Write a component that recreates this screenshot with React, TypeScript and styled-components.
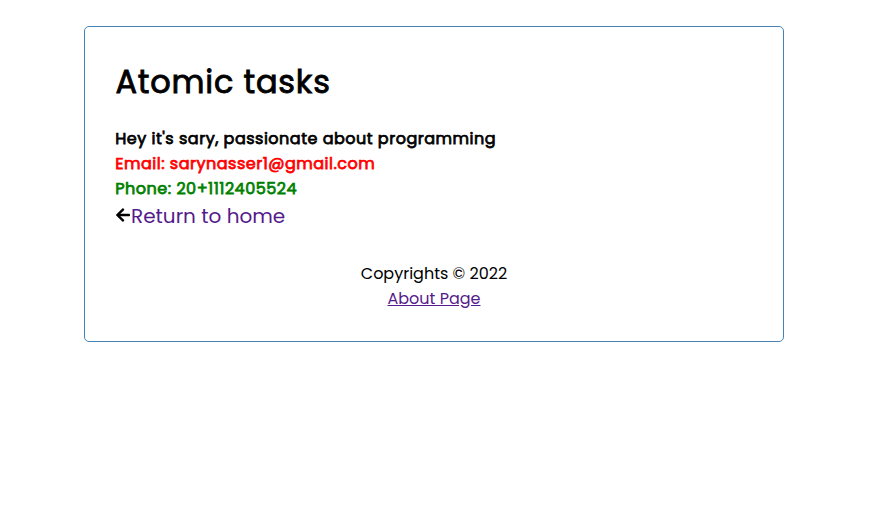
import React from "react";
import styled, { createGlobalStyle } from "styled-components";
import { FaArrowLeft } from "react-icons/fa";

const GlobalStyle = createGlobalStyle`
  * { box-sizing: border-box; margin: 0; padding: 0; }
  body { font-family: Poppins, Inter, "Open Sans", sans-serif; font-size: 16px; line-height: 25px; background: #fff; color: #000; }
`;

const Container = styled.div`
  width: 700px;
  min-height: 316px;
  margin: 26px 0 0 84px;
  padding: 29px 30px;
  border: 1px solid steelblue;
  border-radius: 5px;
`;

const Header = styled.header`
  display: flex;
  align-items: center;
  height: 51px;
  margin-bottom: 19px;
`;

const Title = styled.h1`
  padding-left: 0.4px;
  font-size: 32px;
  font-weight: 400;
  line-height: 51px;
  white-space: nowrap;
  letter-spacing: 0.8px;
  -webkit-text-stroke: 0.85px currentColor;
`;

const Line = styled.h4<{ $color?: string }>`
  height: 25px;
  padding-left: 0.3px;
  font-weight: 400;
  white-space: nowrap;
  letter-spacing: 0.5px;
  color: ${(p) => p.$color ?? "black"};
  -webkit-text-stroke: 0.75px currentColor;
`;

const BackRow = styled.div`
  display: flex;
  align-items: center;
  height: 30px;
`;

const ArrowIcon = styled(FaArrowLeft)`
  width: 16px;
  height: 16px;
  margin-bottom: 2px;
`;

const BackLink = styled.a`
  font-size: 20px;
  line-height: 30px;
  color: #551a8b;
  text-decoration: none;
`;

const Footer = styled.footer`
  margin-top: 30px;
  text-align: center;
`;

const AboutLink = styled.a`
  color: #551a8b;
  text-decoration: underline;
`;

export default function App() {
  return (
    <>
      <GlobalStyle />
      <Container>
        <Header>
          <Title>Atomic tasks</Title>
        </Header>
        <Line>Hey it's sary, passionate about programming</Line>
        <Line $color="red">Email: sarynasser1@gmail.com</Line>
        <Line $color="green">Phone: 20+1112405524</Line>
        <BackRow>
          <ArrowIcon />
          <BackLink href="#">Return to home</BackLink>
        </BackRow>
        <Footer>
          <p>Copyrights © 2022</p>
          <AboutLink href="#">About Page</AboutLink>
        </Footer>
      </Container>
    </>
  );
}
